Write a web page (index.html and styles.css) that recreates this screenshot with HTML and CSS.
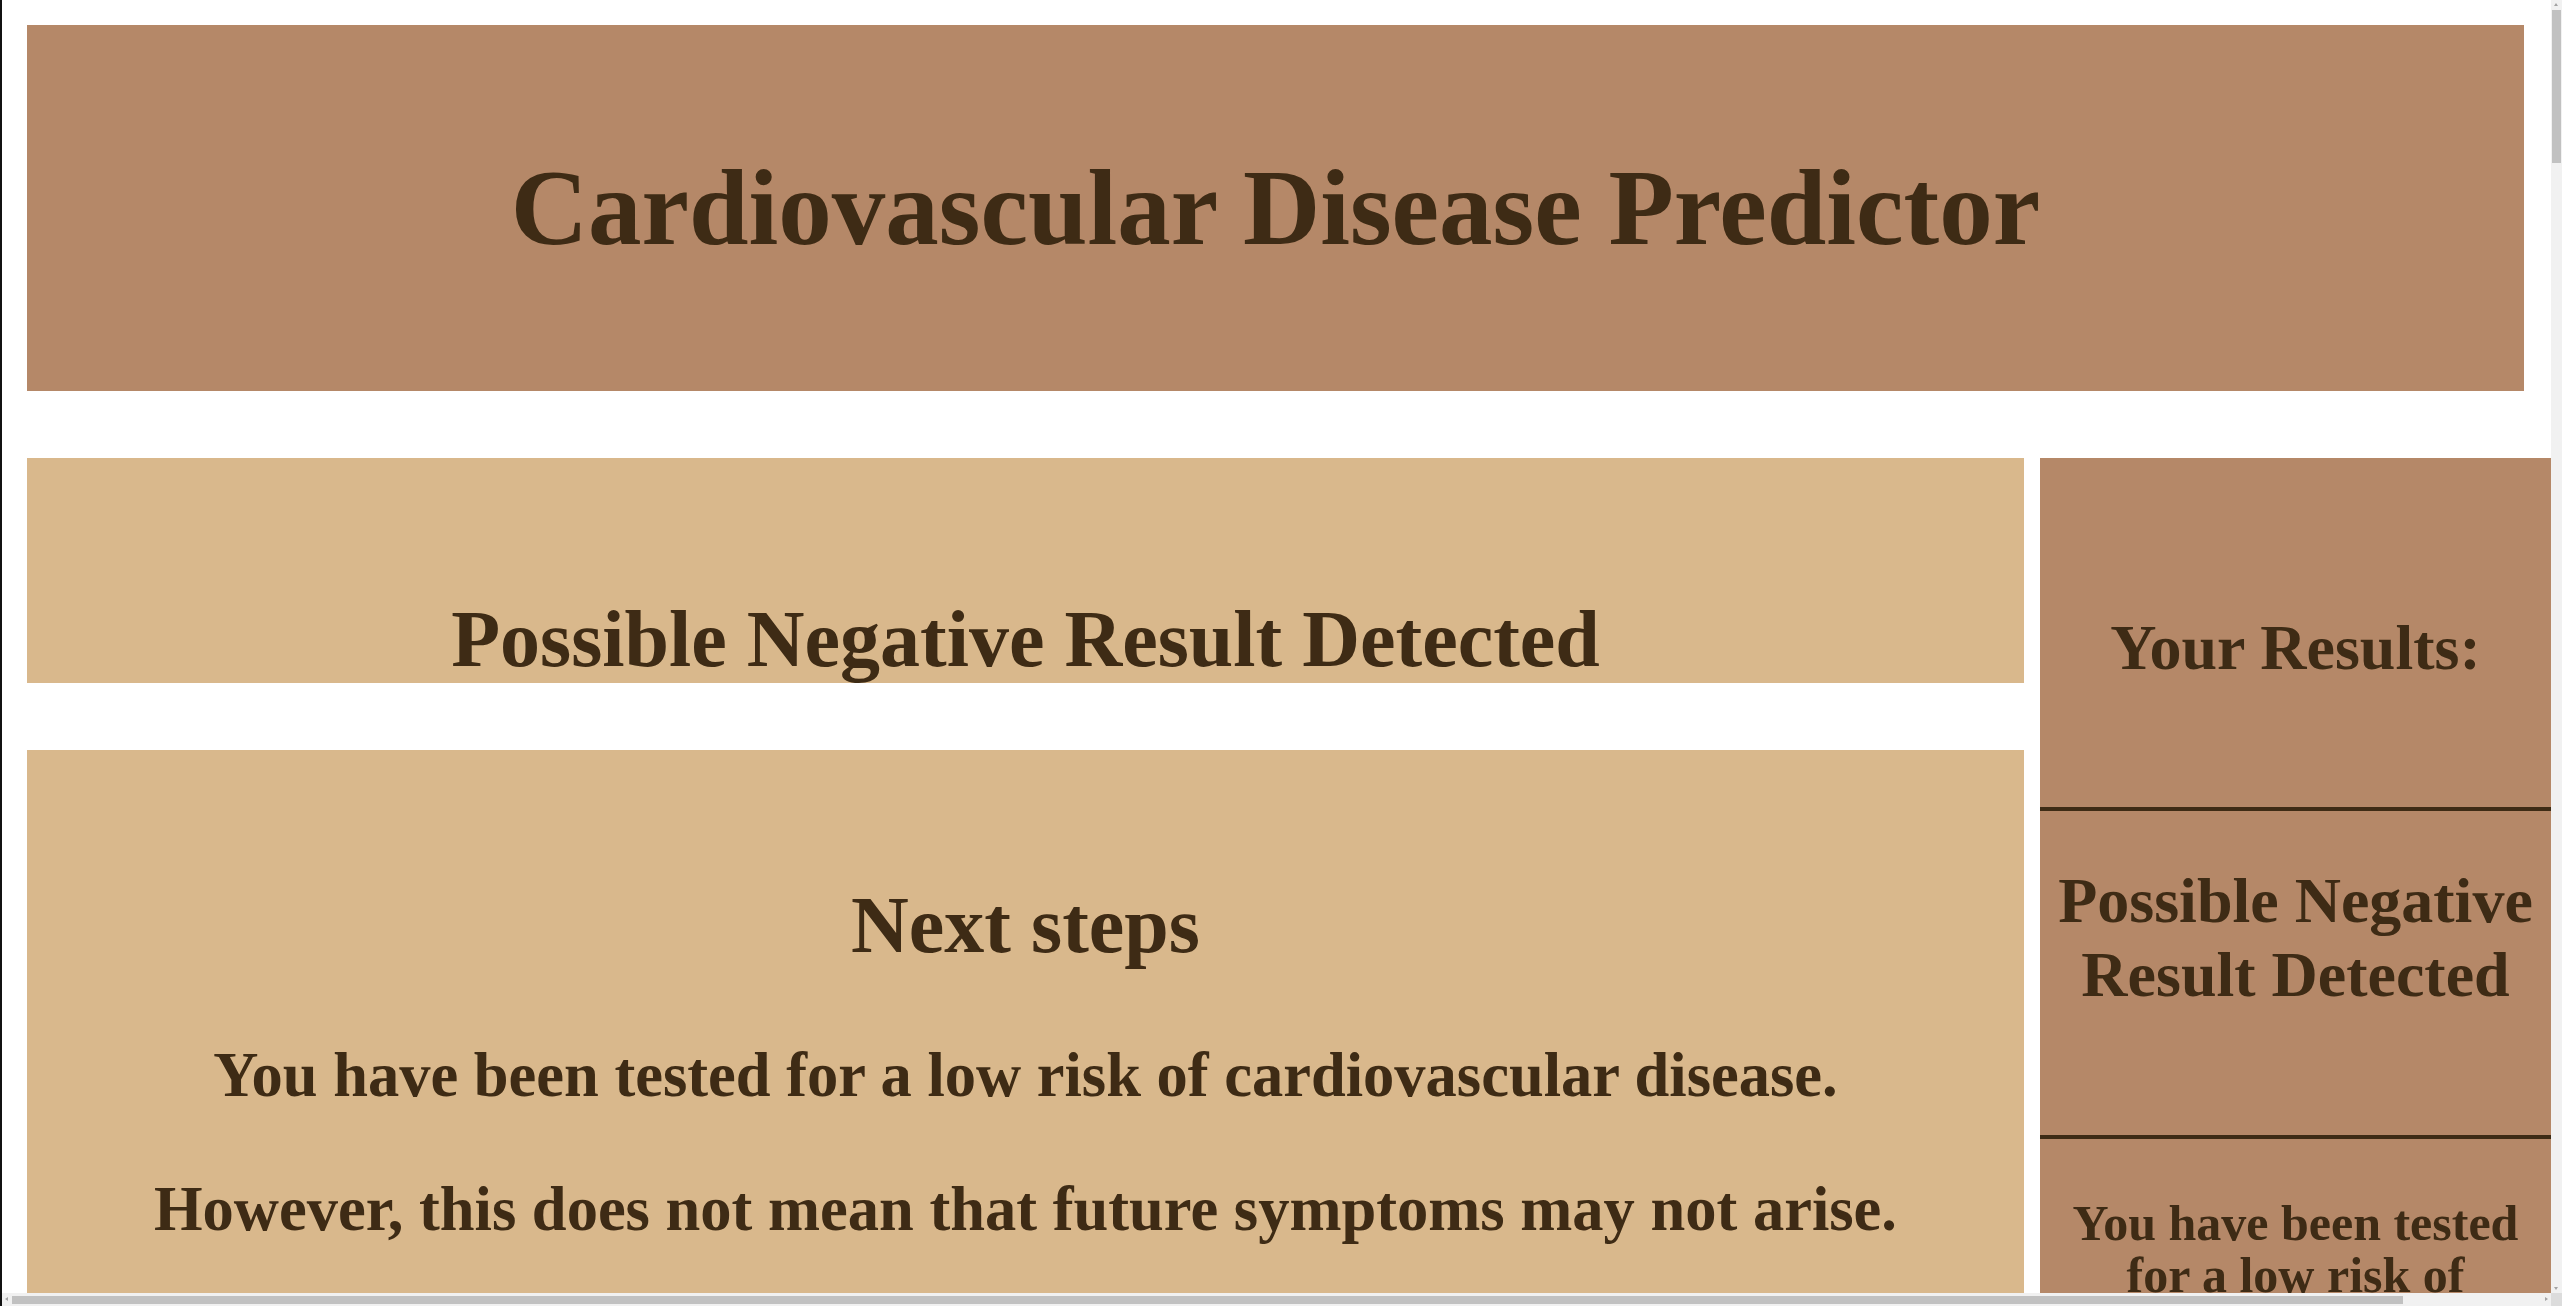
FILE: index.html
```html
<!DOCTYPE html>
<html lang="en">
<head>
<meta charset="utf-8">
<title>Cardiovascular Disease Predictor</title>
<link rel="stylesheet" href="styles.css">
</head>
<body>
<header class="site-header">
  <h1 class="site-title">Cardiovascular Disease Predictor</h1>
</header>
<div class="layout">
  <main class="main">
    <section class="card card-result">
      <h2 class="result-title">Possible Negative Result Detected</h2>
    </section>
    <section class="card card-steps">
      <h2 class="steps-title">Next steps</h2>
      <p class="steps-text">You have been tested for a low risk of cardiovascular disease.</p>
      <p class="steps-text">However, this does not mean that future symptoms may not arise.</p>
    </section>
  </main>
  <aside class="sidebar">
    <div class="side-block side-head">
      <h2 class="side-heading">Your Results:</h2>
    </div>
    <div class="side-block side-result">
      <h2 class="side-result-title">Possible Negative Result Detected</h2>
    </div>
    <div class="side-block side-text">
      <p class="side-para">You have been tested for a low risk of cardiovascular disease.</p>
    </div>
  </aside>
</div>
<div class="fake-vscroll" aria-hidden="true">
  <span class="arrow arrow-up"></span>
  <span class="vthumb"></span>
  <span class="arrow arrow-down"></span>
</div>
<div class="fake-hscroll" aria-hidden="true">
  <span class="arrow arrow-left"></span>
  <span class="hthumb"></span>
  <span class="arrow arrow-right"></span>
</div>
<div class="fake-corner" aria-hidden="true"></div>
</body>
</html>
```

FILE: styles.css
```css
html {
  border-left: 2px solid #111111;
  background: #ffffff;
}

body {
  margin: 0;
  padding: 25px 0 27px 25px;
  font-family: "Liberation Serif", "Times New Roman", serif;
  color: #3e2b15;
  width: 2524px;
}

.site-header {
  width: 2497px;
  height: 366px;
  background: #b58868;
  display: flex;
  align-items: center;
  justify-content: center;
}

.site-title {
  margin: 0;
  font-size: 107px;
  font-weight: bold;
  line-height: 1.149;
}

.layout {
  display: flex;
  gap: 16px;
  margin-top: 67px;
  align-items: flex-start;
}

.main {
  width: 1997px;
  flex: none;
  display: flex;
  flex-direction: column;
  gap: 67px;
}

.card {
  background: #d9b88c;
  text-align: center;
  box-sizing: border-box;
}

.card-result {
  height: 225px;
  padding-top: 136px;
}

.result-title {
  margin: 0;
  font-size: 80px;
  line-height: 1.149;
}

.card-steps {
  padding: 130px 40px 120px;
}

.steps-title {
  margin: 0 0 68px;
  font-size: 80px;
  line-height: 1.149;
}

.steps-text {
  margin: 0 0 62px;
  font-size: 62.5px;
  font-weight: bold;
  line-height: 1.149;
}

.sidebar {
  width: 511px;
  flex: none;
  background: #b58868;
  text-align: center;
}

.side-block {
  box-sizing: border-box;
}

.side-head {
  height: 353px;
  padding-top: 153px;
  border-bottom: 4px solid #3e2b15;
}

.side-heading {
  margin: 0;
  font-size: 64px;
  line-height: 1.149;
}

.side-result {
  height: 328px;
  padding-top: 53px;
  border-bottom: 4px solid #3e2b15;
}

.side-result-title {
  margin: 0;
  font-size: 64px;
  line-height: 1.149;
}

.side-text {
  padding: 58px 8px 60px;
}

.side-para {
  margin: 0;
  font-size: 50px;
  font-weight: bold;
  line-height: 52px;
}

/* scrollbars of the captured window, drawn over the page */
.fake-vscroll {
  position: fixed;
  top: 0;
  right: 0;
  bottom: 13px;
  width: 11px;
  background: #f1f1f1;
}

.vthumb {
  position: absolute;
  top: 10px;
  left: 1px;
  width: 9px;
  height: 153px;
  background: #c1c1c1;
}

.fake-hscroll {
  position: fixed;
  left: 2px;
  right: 11px;
  bottom: 0;
  height: 13px;
  background: #f1f1f1;
}

.hthumb {
  position: absolute;
  left: 10px;
  top: 3px;
  width: 2391px;
  height: 8px;
  background: #c1c1c1;
}

.fake-corner {
  position: fixed;
  right: 0;
  bottom: 0;
  width: 11px;
  height: 13px;
  background: #dcdcdc;
}

.arrow {
  position: absolute;
  width: 0;
  height: 0;
  border-style: solid;
  border-color: transparent;
}

.arrow-up {
  top: 3px;
  left: 3px;
  border-width: 0 2.5px 3px 2.5px;
  border-bottom-color: #a3a3a3;
}

.arrow-down {
  bottom: 3px;
  left: 3px;
  border-width: 3px 2.5px 0 2.5px;
  border-top-color: #a3a3a3;
}

.arrow-left {
  left: 3px;
  top: 4px;
  border-width: 2.5px 3px 2.5px 0;
  border-right-color: #a3a3a3;
}

.arrow-right {
  right: 3px;
  top: 4px;
  border-width: 2.5px 0 2.5px 3px;
  border-left-color: #a3a3a3;
}
```
